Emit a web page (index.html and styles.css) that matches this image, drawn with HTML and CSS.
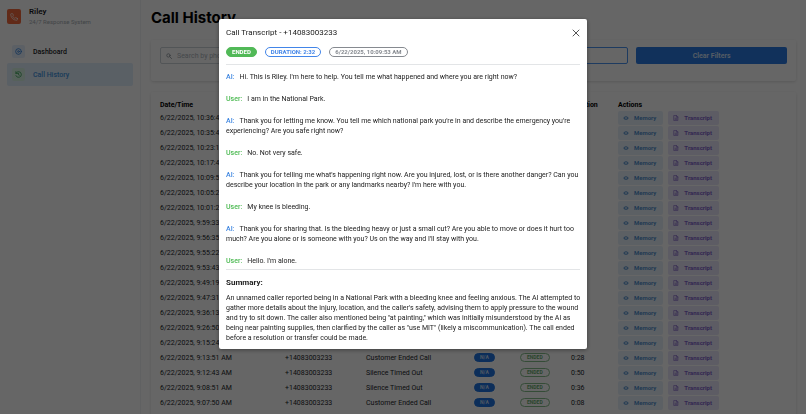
FILE: index.html
```
<!DOCTYPE html>
<html lang="en">
<head>
<meta charset="utf-8">
<meta name="viewport" content="width=device-width, initial-scale=1">
<title>Riley - Call History</title>
<link rel="stylesheet" href="styles.css">
</head>
<body>
<svg class="sprite" aria-hidden="true">
  <symbol id="eye" viewBox="0 0 16 16"><path fill="currentColor" fill-rule="evenodd" d="M1 8c2-4 4.500-5 7-5s5 1 7 5c-2 4-4.500 5-7 5s-5-1-7-5zm7-3.500a3.500 3.500 0 100 7 3.500 3.500 0 000-7z"/><circle cx="8" cy="8" r="2" fill="currentColor"/></symbol>
  <symbol id="file" viewBox="0 0 16 16"><path fill="none" stroke="currentColor" stroke-width="1.600" stroke-linejoin="round" d="M3 1.500h6.500l3.500 3.500v9.500H3zM9 1.500V5.500h4M5.500 8.500h5M5.500 11.500h5"/></symbol>
</svg>
<div class="app">
  <aside class="sidebar">
    <div class="brand">
      <span class="logo"><svg viewBox="0 0 24 24"><path d="M22 16.900v3a2 2 0 01-2.200 2A19.800 19.800 0 012.100 4.200 2 2 0 014.100 2h3a2 2 0 012 1.700c.1 1 .4 1.900.7 2.800a2 2 0 01-.5 2.100L8.100 9.900a16 16 0 006 6l1.300-1.300a2 2 0 012.100-.4c.9.300 1.800.6 2.800.7a2 2 0 011.700 2z"/></svg></span>
      <div>
        <div class="brand-name">Riley</div>
        <div class="brand-sub">24/7 Response System</div>
      </div>
    </div>
    <nav class="nav">
      <a href="#dashboard"><span class="nav-icon blue"><svg viewBox="0 0 16 16"><circle cx="8" cy="8" r="6.500"/><circle cx="8" cy="8" r="2"/></svg></span>Dashboard</a>
      <a href="#history" class="active"><span class="nav-icon green"><svg viewBox="0 0 16 16"><path d="M2 10.500A6.500 6.500 0 108 1.500 6.500 6.500 0 002 5.500M2 1.500v4h4M8 5v3.500l2 1"/></svg></span>Call History</a>
    </nav>
  </aside>
  <main class="main">
    <h1>Call History</h1>
    <form class="card filters">
      <label class="search"><svg viewBox="0 0 16 16"><circle cx="6.500" cy="6.500" r="4.500"/><path d="M10 10l5 5"/></svg><input type="search" aria-label="Search by phone" placeholder="Search by phone"></label>
      <input class="field" type="text" aria-label="Reason">
      <input class="field focus" type="text" aria-label="Date">
      <button type="button" class="clear">Clear Filters</button>
    </form>
    <section class="card">
      <table>
        <colgroup><col class="c-date"><col class="c-phone"><col class="c-reason"><col class="c-tag"><col class="c-status"><col class="c-time"><col></colgroup>
        <thead><tr><th>Date/Time</th><th>Phone</th><th>Reason</th><th>Type</th><th>Status</th><th>Duration</th><th>Actions</th></tr></thead>
        <tbody id="rows"></tbody>
      </table>
    </section>
  </main>
</div>
<div class="overlay">
  <div class="modal" role="dialog" aria-modal="true" aria-labelledby="modal-title">
    <header class="modal-head">
      <h2 id="modal-title">Call Transcript - +14083003233</h2>
      <button type="button" class="close" aria-label="Close"><svg viewBox="0 0 8 8"><path d="M1 1l6 6M7 1L1 7"/></svg></button>
    </header>
    <div class="pills">
      <span class="pill solid">ENDED</span>
      <span class="pill info">DURATION: 2:32</span>
      <span class="pill muted">6/22/2025, 10:09:53 AM</span>
    </div>
    <div class="transcript">
      <p><b class="ai">AI:</b>Hi. This is Riley. I'm here to help. You tell me what happened and where you are right now?</p>
      <p><b class="user">User:</b>I am in the National Park.</p>
      <p><b class="ai">AI:</b>Thank you for letting me know. You tell me which national park you're in and describe the emergency you're experiencing? Are you safe right now?</p>
      <p><b class="user">User:</b>No. Not very safe.</p>
      <p><b class="ai">AI:</b>Thank you for telling me what's happening right now. Are you injured, lost, or is there another danger? Can you describe your location in the park or any landmarks nearby? I'm here with you.</p>
      <p><b class="user">User:</b>My knee is bleeding.</p>
      <p><b class="ai">AI:</b>Thank you for sharing that. Is the bleeding heavy or just a small cut? Are you able to move or does it hurt too much? Are you alone or is someone with you? Us on the way and I'll stay with you.</p>
      <p><b class="user">User:</b>Hello. I'm alone.</p>
    </div>
    <section class="summary">
      <h3>Summary:</h3>
      <p>An unnamed caller reported being in a National Park with a bleeding knee and feeling anxious. The AI attempted to gather more details about the injury, location, and the caller's safety, advising them to apply pressure to the wound and try to sit down. The caller also mentioned being "at painting," which was initially misunderstood by the AI as being near painting supplies, then clarified by the caller as "use MIT" (likely a miscommunication). The call ended before a resolution or transfer could be made.</p>
    </section>
  </div>
</div>
<script src="app.js"></script>
</body>
</html>
```
FILE: app.js
```
const calls = [
  ["10:36:42", 0, "0:28"], ["10:35:40", 0, "0:31"], ["10:23:19", 0, "0:42"], ["10:17:45", 0, "1:12"],
  ["10:09:53", 0, "2:32"], ["10:05:21", 0, "0:50"], ["10:01:22", 0, "0:36"], ["9:59:33", 0, "0:28"],
  ["9:56:35", 0, "0:44"], ["9:55:22", 0, "0:18"], ["9:53:43", 0, "0:39"], ["9:49:19", 0, "0:50"],
  ["9:47:31", 0, "0:36"], ["9:36:13", 0, "0:28"], ["9:26:50", 0, "0:50"], ["9:15:24", 0, "0:36"],
  ["9:13:51", 0, "0:28"], ["9:12:43", 1, "0:50"], ["9:08:51", 1, "0:36"], ["9:07:50", 0, "0:08"]
];
const reasons = ["Customer Ended Call", "Silence Timed Out"];
document.getElementById("rows").innerHTML = calls.map(([time, reason, length]) => `
  <tr>
    <td>6/22/2025, ${time} AM</td><td>+14083003233</td><td>${reasons[reason]}</td>
    <td><span class="tag">N/A</span></td><td><span class="tag outline">ENDED</span></td><td>${length}</td>
    <td><div class="actions">
      <button type="button" class="memory"><svg><use href="#eye"/></svg>Memory</button>
      <button type="button" class="script"><svg><use href="#file"/></svg>Transcript</button>
    </div></td>
  </tr>`).join("");
```
FILE: styles.css
```
* { box-sizing: border-box; }
html, body { height: 100%; }
body {
  margin: 0;
  overflow: hidden;
  background: #fff;
  color: #1a1b1e;
  font: 7px/10px Roboto, "Liberation Sans", sans-serif;
}
h1, h2, h3, p { margin: 0; }
button, input { font: inherit; }
button { border: 0; padding: 0; cursor: pointer; }
svg { fill: none; stroke: currentColor; stroke-width: 2; stroke-linecap: round; }
.sprite { position: absolute; width: 0; height: 0; }

.app { display: flex; min-height: 100%; }
.sidebar { flex: none; width: 141px; padding: 7px; border-right: 1px solid #f1f3f5; }
.brand { display: flex; align-items: center; gap: 8px; }
.logo {
  display: grid;
  place-items: center;
  width: 14px;
  height: 15px;
  border-radius: 2px;
  background: #f26a3d;
  color: #fff;
}
.logo svg { width: 8px; height: 8px; }
.brand-name { font-size: 8px; font-weight: 600; }
.brand-sub { color: #a5abb2; font-size: 6px; line-height: 9px; }
.nav { display: grid; margin-top: 14px; }
.nav a {
  display: flex;
  align-items: center;
  gap: 8px;
  height: 23px;
  padding: 0 5px;
  border-radius: 2px;
  color: inherit;
  font-weight: 500;
  text-decoration: none;
}
.nav .active { background: #e1effc; color: #3f93e0; }
.nav-icon { display: grid; place-items: center; width: 13px; height: 13px; border-radius: 2px; }
.nav-icon svg { width: 7px; height: 7px; }
.blue { background: #e7f1fd; color: #3a86dc; }
.green { background: #d8f2e4; color: #46ad62; }

.main { flex: 1; padding: 8px 10px 0; }
h1 { color: #000; font: 700 15px/20px Inter, sans-serif; }
.card { border-radius: 2px; padding: 7px 9px; box-shadow: 0 1px 3px #0002; }
.filters {
  display: grid;
  grid-template-columns: repeat(4, 1fr);
  gap: 8px;
  height: 41px;
  margin: 12px 0 11px;
}
.search, .field, .clear { width: 100%; height: 17px; border-radius: 2px; }
.search { display: flex; align-items: center; gap: 5px; padding: 0 5px; border: 1px solid #ced4da; color: #868e96; }
.search svg { flex: none; width: 6px; height: 6px; }
.search input { flex: 1; min-width: 0; border: 0; padding: 0; background: none; outline: 0; }
.search input::placeholder { color: #adb5bd; }
.field { border: 1px solid #ced4da; background: none; }
.focus { border-color: #4c94ef; }
.clear { background: #2b7be4; color: #d9e7fa; font-weight: 600; }

table { width: 100%; table-layout: fixed; border-collapse: collapse; color: #000; }
.c-date { width: 125px; }
.c-phone { width: 81px; }
.c-reason { width: 108px; }
.c-tag { width: 46px; }
.c-status { width: 51px; }
.c-time { width: 47px; }
th, td { height: 15px; padding: 0; text-align: left; white-space: nowrap; }
th { height: 11px; font-weight: 700; }
tbody { color: #212529; }
.tag {
  display: inline-grid;
  place-items: center;
  height: 9px;
  padding: 0 5px;
  border: 1px solid #1f74e0;
  border-radius: 5px;
  background: #1f74e0;
  color: #c9dcf6;
  font-size: 5px;
  font-weight: 700;
  line-height: 7px;
  vertical-align: middle;
}
.outline { padding: 0 6px; border-color: #85bf8b; background: none; color: #69ad70; }
.actions { display: flex; gap: 5px; }
.actions button {
  display: flex;
  align-items: center;
  gap: 5px;
  height: 14px;
  padding: 0 7px 0 5px;
  border-radius: 2px;
  font-size: 6px;
  font-weight: 700;
}
.actions svg { width: 6px; height: 6px; stroke: none; }
.actions .memory { background: #e7f1fb; color: #5592cf; }
.actions .script { background: #e9e5f9; color: #8062cb; }

.overlay {
  position: fixed;
  inset: 0;
  display: flex;
  align-items: flex-start;
  justify-content: center;
  padding: 19px;
  background: rgba(0, 0, 0, 0.6);
}
.modal {
  width: 46%;
  min-width: 368px;
  padding: 7px 7px 6px;
  border-radius: 2px;
  background: #fff;
  color: #222;
  box-shadow: 0 1px 4px #0006;
}
.modal-head { display: flex; align-items: center; justify-content: space-between; height: 14px; }
h2 { font-size: 8px; line-height: 12px; font-weight: 400; }
.close { display: grid; place-items: center; width: 9px; height: 9px; background: none; color: #555; }
.close svg { width: 8px; height: 8px; stroke-width: 1; }
.pills { display: flex; gap: 8px; margin: 7px 0; }
.pill { height: 10px; padding: 0 5px; border: 1px solid; border-radius: 5px; font-size: 6px; font-weight: 700; line-height: 8px; }
.solid { border-color: #51b957; background: #51b957; color: #fff; }
.info { color: #4285e8; }
.muted { color: #868a90; }
.transcript { display: grid; gap: 12px; padding: 7px 0 3px; border: solid #e3e5e7; border-width: 1px 0; }
.transcript b { margin-right: 5px; font-weight: 500; }
.ai { color: #3d85e0; }
.user { color: #4bb951; }
.summary { padding-top: 8px; }
.summary p { margin-right: -4px; }
h3 { margin-bottom: 5px; font-size: 8px; line-height: 10px; font-weight: 700; }
```
